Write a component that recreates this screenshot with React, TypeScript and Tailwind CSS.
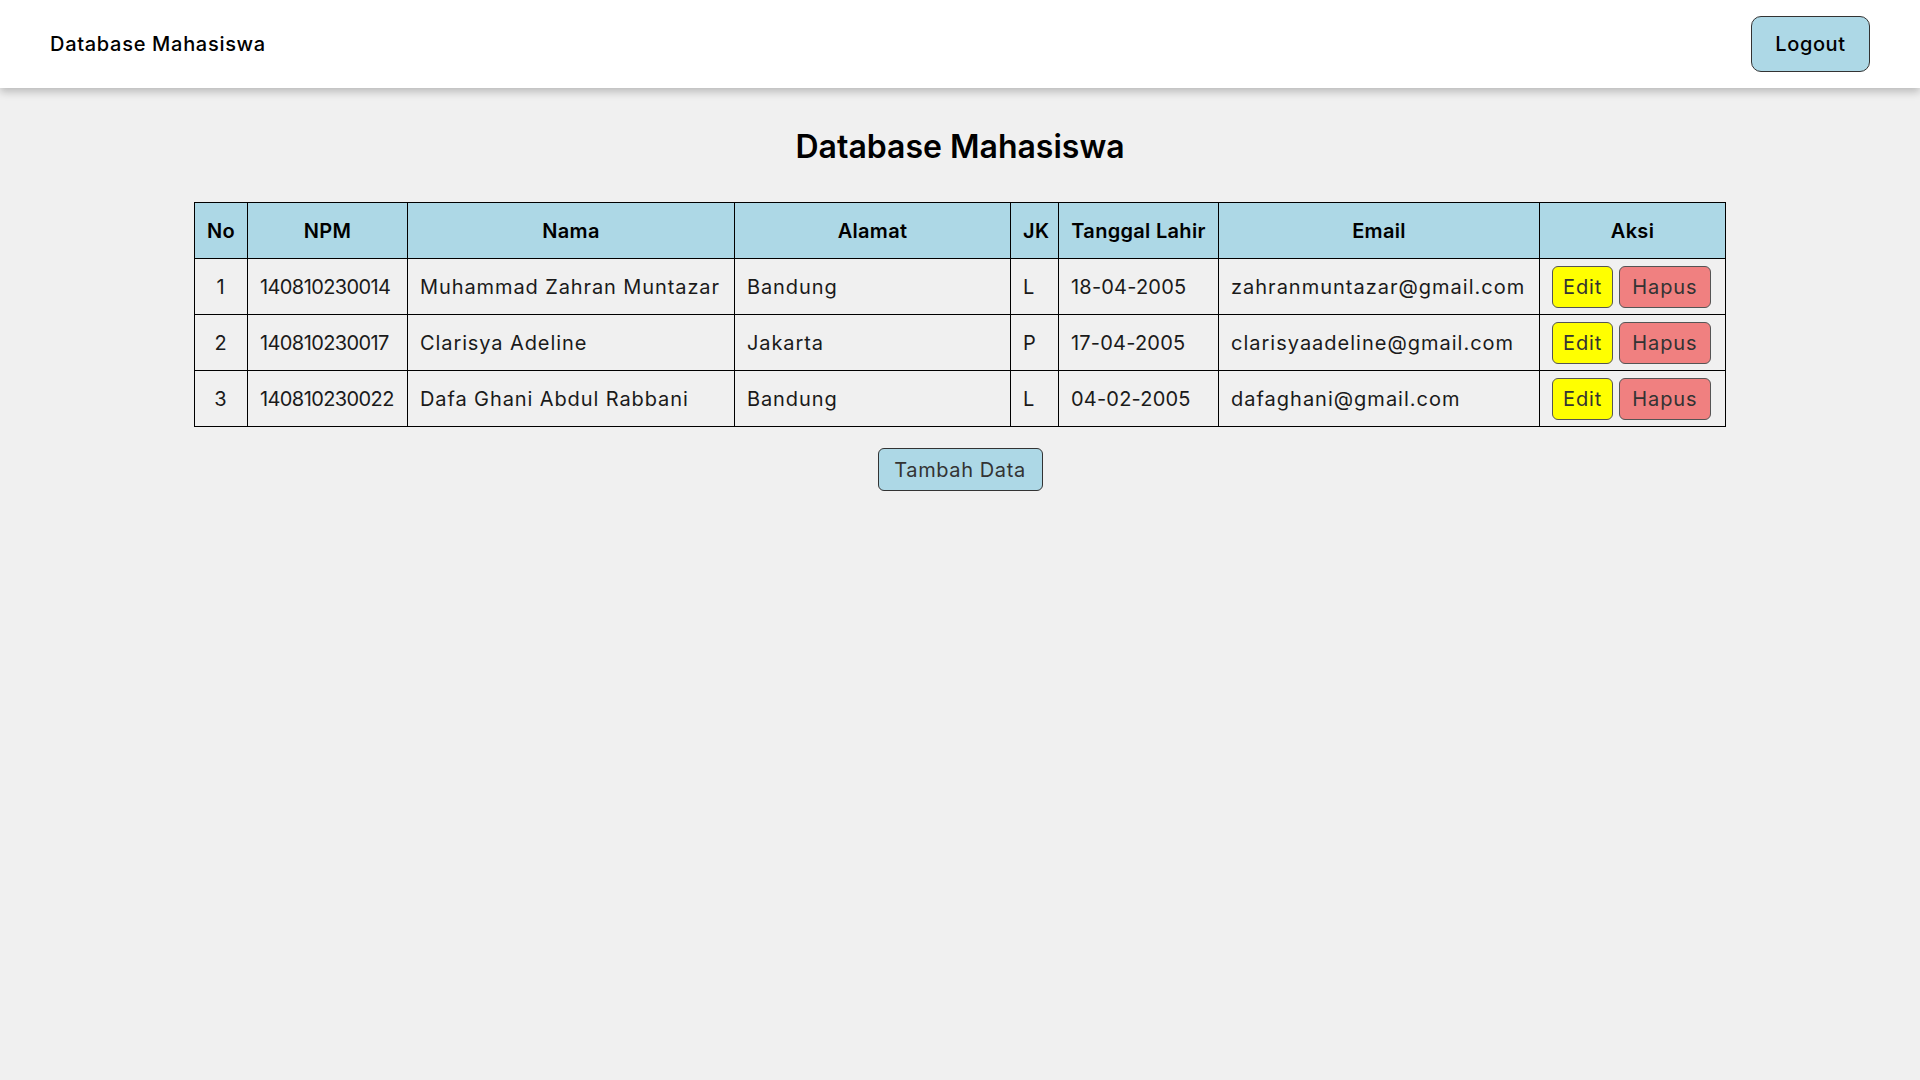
import React from "react";

const rows = [
  { no: 1, npm: "140810230014", nama: "Muhammad Zahran Muntazar", alamat: "Bandung", jk: "L", tgl: "18-04-2005", email: "zahranmuntazar@gmail.com" },
  { no: 2, npm: "140810230017", nama: "Clarisya Adeline", alamat: "Jakarta", jk: "P", tgl: "17-04-2005", email: "clarisyaadeline@gmail.com" },
  { no: 3, npm: "140810230022", nama: "Dafa Ghani Abdul Rabbani", alamat: "Bandung", jk: "L", tgl: "04-02-2005", email: "dafaghani@gmail.com" },
];

export default function App() {
  return (
    <div className="min-h-screen bg-[#f0f0f0] text-black" style={{ fontFamily: "Inter, 'Noto Sans', sans-serif" }}>
      <header className="h-[88px] bg-white flex items-center justify-between px-[50px] shadow-[0_4px_8px_rgba(0,0,0,0.22)]">
        <div className="text-[20px] font-medium tracking-[0.7px]">Database Mahasiswa</div>
        <button className="w-[119px] h-[56px] rounded-[10px] border border-[#333] bg-[#add8e6] text-[20px] font-medium tracking-[0.6px]">Logout</button>
      </header>
      <main className="pt-[35px] flex flex-col items-center">
        <h1 className="text-[32px] leading-[48px] font-semibold mb-[31px]">Database Mahasiswa</h1>
        <table className="table-fixed border-collapse w-[1531px] text-[20px] leading-[30px] tracking-[0.9px]">
          <colgroup>
            <col className="w-[53px]" />
            <col className="w-[160px]" />
            <col className="w-[327px]" />
            <col className="w-[276px]" />
            <col className="w-[48px]" />
            <col className="w-[160px]" />
            <col className="w-[321px]" />
            <col className="w-[186px]" />
          </colgroup>
          <thead>
            <tr className="bg-[#add8e6] h-[56px]">
              {["No", "NPM", "Nama", "Alamat", "JK", "Tanggal Lahir", "Email", "Aksi"].map((h) => (
                <th key={h} className="border border-black px-[12px] py-0 font-semibold text-center whitespace-nowrap tracking-[0.3px]">{h}</th>
              ))}
            </tr>
          </thead>
          <tbody className="text-[#1a1a1a]">
            {rows.map((r) => (
              <tr key={r.no} className="h-[56px]">
                <td className="border border-black px-[12px] py-0 text-center">{r.no}</td>
                <td className="border border-black px-[12px] py-0 whitespace-nowrap tracking-[-0.6px]">{r.npm}</td>
                <td className="border border-black px-[12px] py-0 whitespace-nowrap">{r.nama}</td>
                <td className="border border-black px-[12px] py-0">{r.alamat}</td>
                <td className="border border-black px-[12px] py-0">{r.jk}</td>
                <td className="border border-black px-[12px] py-0 whitespace-nowrap tracking-[0.2px]">{r.tgl}</td>
                <td className="border border-black px-[12px] py-0 whitespace-nowrap tracking-[1px]">{r.email}</td>
                <td className="border border-black px-[12px] py-0 whitespace-nowrap">
                  <div className="flex gap-[6px]">
                    <button className="h-[42px] px-[10px] rounded-[6px] border border-[#555] bg-[#ffff00] text-[#333]">Edit</button>
                    <button className="h-[42px] px-[12px] rounded-[6px] border border-[#555] bg-[#f08080] text-[#333]">Hapus</button>
                  </div>
                </td>
              </tr>
            ))}
          </tbody>
        </table>
        <button className="mt-[21px] w-[165px] h-[43px] rounded-[6px] border border-[#333] bg-[#add8e6] text-[20px] text-[#333] tracking-[0.6px]">Tambah Data</button>
      </main>
    </div>
  );
}
